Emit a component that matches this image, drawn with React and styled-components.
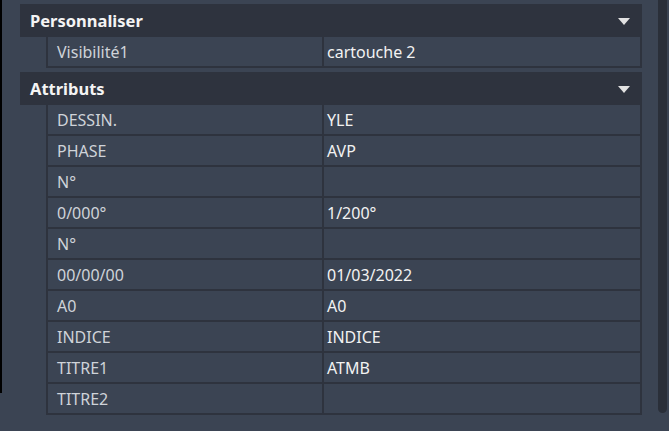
import React from 'react';
import styled, { createGlobalStyle } from 'styled-components';

const Global = createGlobalStyle`
    html, body {
        margin: 0;
        padding: 0;
        background: #3b4453;
        font-family: "Noto Sans", "Open Sans", sans-serif;
    }
    * {
        box-sizing: border-box;
    }
`;

const Page = styled.div`
    display: flex;
    width: 669px;
    height: 431px;
    background: #3b4453;
    overflow: hidden;
`;

const EdgeStrip = styled.div`
    width: 2px;
    height: 393px;
    background: #000;
    flex: none;
`;

const Panel = styled.div`
    width: 640px;
    padding: 4px 0 0 18px;
    flex: none;
    display: flex;
    flex-direction: column;
    gap: 4px;
`;

const ScrollTrack = styled.div`
    margin-left: 16px;
    width: 9px;
    height: 413px;
    background: #2a2f39;
    border-radius: 0 0 5px 5px;
    flex: none;
`;

const Section = styled.section`
    display: flex;
    flex-direction: column;
`;

const Header = styled.div`
    height: 33px;
    display: flex;
    align-items: center;
    justify-content: space-between;
    padding: 0 12px 0 10px;
    background: #2e333e;
    color: #f4f4f4;
    font-weight: 700;
    font-size: 16.5px;
`;

const Arrow = styled.span`
    width: 0;
    height: 0;
    border-left: 6px solid transparent;
    border-right: 6px solid transparent;
    border-top: 7px solid #e2e2e2;
    margin-top: 1px;
`;

const Rows = styled.div`
    margin-left: 26px;
    display: flex;
    flex-direction: column;
`;

const Row = styled.div`
    display: grid;
    grid-template-columns: 274px 1fr;
    column-gap: 2px;
    height: 31px;
    background: #2e333e;
    border: 2px solid #2e333e;
    border-top: none;
`;

const Cell = styled.div`
    background: #3b4453;
    display: flex;
    align-items: center;
    padding-left: ${p => (p.value ? 3 : 9)}px;
    color: ${p => (p.value ? '#f2f2f2' : '#cfd3d9')};
    font-size: 16px;
    white-space: nowrap;
`;

const sections = [
    {
        title: 'Personnaliser',
        rows: [['Visibilité1', 'cartouche 2']],
    },
    {
        title: 'Attributs',
        rows: [
            ['DESSIN.', 'YLE'],
            ['PHASE', 'AVP'],
            ['N°', ''],
            ['0/000°', '1/200°'],
            ['N°', ''],
            ['00/00/00', '01/03/2022'],
            ['A0', 'A0'],
            ['INDICE', 'INDICE'],
            ['TITRE1', 'ATMB'],
            ['TITRE2', ''],
        ],
    },
];

export default () => (
    <Page>
        <Global />
        <EdgeStrip />
        <Panel>
            {sections.map(s => (
                <Section key={s.title}>
                    <Header>
                        {s.title}
                        <Arrow />
                    </Header>
                    <Rows>
                        {s.rows.map(([label, value], i) => (
                            <Row key={i}>
                                <Cell>{label}</Cell>
                                <Cell value>{value}</Cell>
                            </Row>
                        ))}
                    </Rows>
                </Section>
            ))}
        </Panel>
        <ScrollTrack />
    </Page>
);
